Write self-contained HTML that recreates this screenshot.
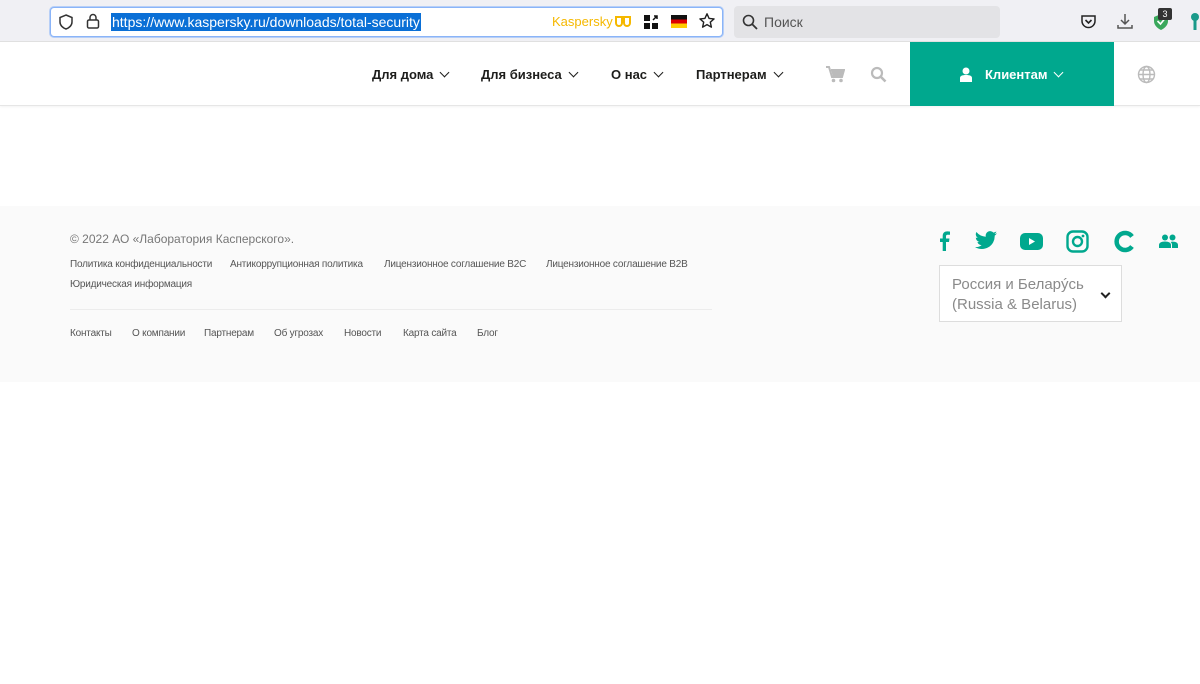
<!DOCTYPE html>
<html><head><meta charset="utf-8"><style>
*{margin:0;padding:0;box-sizing:border-box}
body{width:1200px;height:684px;background:#fff;font-family:"Liberation Sans",sans-serif;position:relative;overflow:hidden}
.a{position:absolute;white-space:nowrap}
.nav{font-size:13px;font-weight:bold;color:#1d1d1b;top:67px}
.chev{display:inline-block;width:7px;height:7px;border-right:1.6px solid #1d1d1b;border-bottom:1.6px solid #1d1d1b;transform:rotate(45deg);margin-left:8px;position:relative;top:-3px}
.f{font-size:10px;color:#555;letter-spacing:-0.2px}
</style></head><body>
<div class="a" style="left:0;top:0;width:1200px;height:42px;background:#f0f0f4;border-bottom:1px solid #e0e0e0"></div>
<div class="a" style="left:50px;top:7px;width:673px;height:30px;background:#fff;border:1px solid #8ab4f8;border-radius:4px;box-shadow:0 0 0 1px #b7cff7"></div>
<svg class="a" style="left:57px;top:13px" width="18" height="18" viewBox="0 0 18 18"><path d="M9 2 L15 4.5 V9 C15 12.5 12 15 9 16 C6 15 3 12.5 3 9 V4.5 Z" fill="none" stroke="#333" stroke-width="1.5"/></svg>
<svg class="a" style="left:85px;top:12px" width="16" height="18" viewBox="0 0 16 18"><rect x="2.5" y="8" width="11" height="8" rx="1.5" fill="none" stroke="#333" stroke-width="1.5"/><path d="M5 8V5.5a3 3 0 0 1 6 0V8" fill="none" stroke="#333" stroke-width="1.5"/></svg>
<div class="a" style="left:111px;top:13px;height:18px;background:#0a6fd6;color:#fff;font-size:14px;line-height:18px;padding:0 1px">https://www.kaspersky.ru/downloads/total-security</div>
<div class="a" style="left:552px;top:14px;font-size:13px;color:#f5b800">Kaspersky</div>
<svg class="a" style="left:614px;top:15px" width="18" height="13"><path d="M1 2h16M2 2v6a3 3 0 0 0 6 0V2M10 2v6a3 3 0 0 0 6 0V2" fill="none" stroke="#f5b800" stroke-width="2"/></svg>
<svg class="a" style="left:643px;top:14px" width="16" height="16"><rect x="1" y="1" width="6" height="6" fill="#111"/><rect x="1" y="9" width="6" height="6" fill="#111"/><rect x="9" y="9" width="6" height="6" fill="#111"/><path d="M10 6 L14 2 M11 2h3v3" stroke="#111" stroke-width="1.5" fill="none"/></svg>
<div class="a" style="left:671px;top:15px;width:16px;height:13px;background:linear-gradient(#111 33%,#d00 33% 66%,#fc0 66%)"></div>
<svg class="a" style="left:698px;top:12px" width="18" height="18" viewBox="0 0 18 18"><path d="M9 1.8 L11.1 6.4 16.1 6.9 12.3 10.2 13.4 15.2 9 12.6 4.6 15.2 5.7 10.2 1.9 6.9 6.9 6.4Z" fill="none" stroke="#222" stroke-width="1.4" stroke-linejoin="round"/></svg>
<div class="a" style="left:734px;top:6px;width:266px;height:32px;background:#e3e3e6;border-radius:4px"></div>
<svg class="a" style="left:742px;top:14px" width="16" height="16"><circle cx="6.5" cy="6.5" r="5" fill="none" stroke="#333" stroke-width="1.6"/><path d="M10 10l5 5" stroke="#333" stroke-width="1.8"/></svg>
<div class="a" style="left:764px;top:14px;font-size:14px;color:#555">Поиск</div>
<svg class="a" style="left:1080px;top:13px" width="17" height="17"><path d="M2 3h13v5a6.5 6.5 0 0 1-13 0z" fill="none" stroke="#222" stroke-width="1.5"/><path d="M5.5 7l3 3 3-3" fill="none" stroke="#222" stroke-width="1.6"/></svg>
<svg class="a" style="left:1116px;top:12px" width="18" height="18"><path d="M9 2v10M5 8l4 4 4-4M2 13v3h14v-3" fill="none" stroke="#555" stroke-width="1.5"/></svg>
<svg class="a" style="left:1152px;top:10px" width="18" height="22"><path d="M9 4 L16 7 V11 C16 15 13 18 9 20 C5 18 2 15 2 11 V7Z" fill="#3aa85c"/><path d="M5.5 11l3 3 4-5" stroke="#fff" stroke-width="1.6" fill="none"/></svg>
<div class="a" style="left:1158px;top:8px;width:14px;height:12px;background:#333;color:#fff;font-size:9px;text-align:center;line-height:12px;border-radius:2px">3</div>
<svg class="a" style="left:1190px;top:12px" width="10" height="20"><circle cx="5" cy="5" r="4" fill="#1a9a8a"/><rect x="3.5" y="8" width="3" height="10" fill="#1a9a8a"/></svg>

<div class="a" style="left:0;top:42px;width:1200px;height:64px;background:#fff;border-bottom:1px solid #e6e6e6;box-shadow:0 1px 2px rgba(0,0,0,.05)"></div>
<div class="a nav" style="left:372px">Для дома<span class="chev"></span></div>
<div class="a nav" style="left:481px">Для бизнеса<span class="chev"></span></div>
<div class="a nav" style="left:611px">О нас<span class="chev"></span></div>
<div class="a nav" style="left:696px">Партнерам<span class="chev"></span></div>
<svg class="a" style="left:826px;top:66px" width="19" height="17"><path d="M0 1h3l3 10h10l2-7H5" fill="none" stroke="#bbb" stroke-width="2"/><path d="M5 4h13l-2 7H7z" fill="#bbb"/><circle cx="7.5" cy="14.5" r="1.8" fill="#bbb"/><circle cx="15" cy="14.5" r="1.8" fill="#bbb"/></svg>
<svg class="a" style="left:870px;top:66px" width="17" height="17"><circle cx="7" cy="7" r="5" fill="none" stroke="#bbb" stroke-width="2.2"/><path d="M10.5 10.5l5 5" stroke="#bbb" stroke-width="2.6"/></svg>
<div class="a" style="left:910px;top:42px;width:204px;height:64px;background:#00a88e"></div>
<svg class="a" style="left:959px;top:67px" width="14" height="15"><circle cx="7" cy="4" r="3.5" fill="#fff"/><path d="M1 15v-4c0-2 2-3 6-3s6 1 6 3v4z" fill="#fff"/></svg>
<div class="a nav" style="left:985px;color:#fff">Клиентам<span class="chev" style="border-color:#fff"></span></div>
<svg class="a" style="left:1137px;top:65px" width="19" height="19" viewBox="0 0 19 19" fill="none" stroke="#bbb" stroke-width="1.4"><circle cx="9.5" cy="9.5" r="8"/><ellipse cx="9.5" cy="9.5" rx="3.5" ry="8"/><path d="M1.5 9.5h16M3 5h13M3 14h13"/></svg>

<div class="a" style="left:0;top:206px;width:1200px;height:176px;background:#fafafa"></div>
<div class="a" style="left:70px;top:232px;font-size:12px;color:#777">© 2022 АО «Лаборатория Касперского».</div>
<div class="a f" style="left:70px;top:259px">Политика конфиденциальности</div>
<div class="a f" style="left:230px;top:259px">Антикоррупционная политика</div>
<div class="a f" style="left:384px;top:259px">Лицензионное соглашение B2C</div>
<div class="a f" style="left:546px;top:259px">Лицензионное соглашение B2B</div>
<div class="a f" style="left:70px;top:279px">Юридическая информация</div>
<div class="a" style="left:70px;top:309px;width:642px;height:1px;background:#ececec"></div>
<div class="a f" style="left:70px;top:328px">Контакты</div>
<div class="a f" style="left:132px;top:328px">О компании</div>
<div class="a f" style="left:204px;top:328px">Партнерам</div>
<div class="a f" style="left:274px;top:328px">Об угрозах</div>
<div class="a f" style="left:344px;top:328px">Новости</div>
<div class="a f" style="left:403px;top:328px">Карта сайта</div>
<div class="a f" style="left:477px;top:328px">Блог</div>

<svg class="a" style="left:938px;top:231px" width="12" height="20"><path d="M8 20V11h3l.5-3.5H8V5.5c0-1 .3-1.7 1.8-1.7H12V.6C11.5.5 10.4.4 9.2.4 6.6.4 4.7 2 4.7 4.9v2.6H2V11h2.7v9z" fill="#00a88e"/></svg>
<svg class="a" style="left:974px;top:231px" width="24" height="20" viewBox="0 0 24 20"><path d="M23 2.3c-.8.4-1.7.6-2.6.7.9-.6 1.7-1.5 2-2.5-.9.5-1.9.9-2.9 1.1A4.5 4.5 0 0 0 11.8 5.7 12.9 12.9 0 0 1 2.4 1 4.5 4.5 0 0 0 3.8 7 4.5 4.5 0 0 1 1.8 6.5a4.5 4.5 0 0 0 3.6 4.4 4.5 4.5 0 0 1-2 .1 4.5 4.5 0 0 0 4.2 3.1A9 9 0 0 1 1 16a12.8 12.8 0 0 0 19.7-11.4c.9-.6 1.7-1.4 2.3-2.3z" fill="#00a88e"/></svg>
<svg class="a" style="left:1020px;top:233px" width="23" height="17"><rect x="0" y="0" width="23" height="17" rx="5" fill="#00a88e"/><path d="M9 5v7l6-3.5z" fill="#fff"/></svg>
<svg class="a" style="left:1066px;top:230px" width="23" height="23"><rect x="1.5" y="1.5" width="20" height="20" rx="5.5" fill="none" stroke="#00a88e" stroke-width="2.4"/><circle cx="11.5" cy="11.5" r="4.5" fill="none" stroke="#00a88e" stroke-width="2.4"/><circle cx="17" cy="6" r="1.4" fill="#00a88e"/></svg>
<svg class="a" style="left:1113px;top:230px" width="22" height="23"><path d="M19 6.5A8.5 8.5 0 1 0 19 16.5" fill="none" stroke="#00a88e" stroke-width="4.5"/></svg>
<svg class="a" style="left:1159px;top:234px" width="19" height="14"><circle cx="6" cy="3.5" r="3" fill="#00a88e"/><circle cx="13.5" cy="3.5" r="3" fill="#00a88e"/><path d="M0 14v-3c0-2 2-3.5 6-3.5s6 1.5 6 3.5v3zM13 14v-3c0-1.3-.5-2.3-1.4-3 .6-.3 1.2-.4 1.9-.4 4 0 5.5 1.5 5.5 3.4v3z" fill="#00a88e"/></svg>
<div class="a" style="left:939px;top:265px;width:183px;height:57px;border:1px solid #ddd;background:#fff"></div>
<div class="a" style="left:952px;top:275px;font-size:15px;color:#8a8a8a;line-height:20px">Россия и Беларýсь<br>(Russia &amp; Belarus)</div>
<div class="a" style="left:1102px;top:290px;width:7px;height:7px;border-right:2px solid #222;border-bottom:2px solid #222;transform:rotate(45deg)"></div>
</body></html>
